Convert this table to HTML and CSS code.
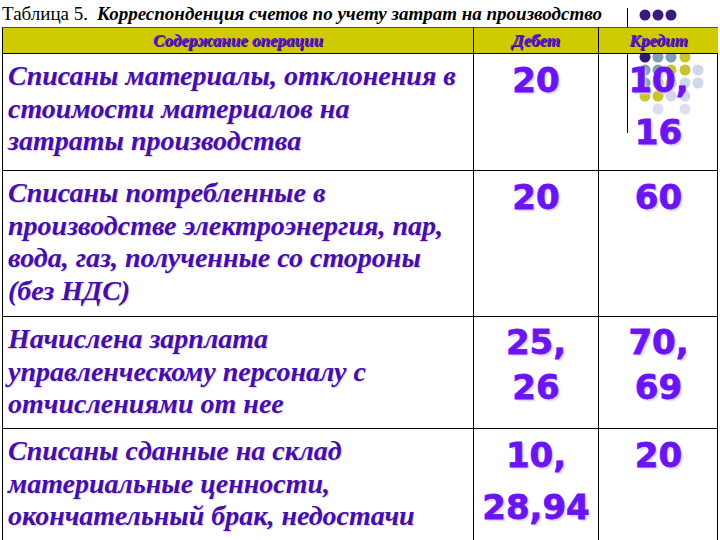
FILE: index.html
```html
<!DOCTYPE html>
<html lang="ru">
<head>
<meta charset="utf-8">
<title>Таблица 5</title>
<link rel="stylesheet" href="styles.css">
</head>
<body>
<div class="slide">
  <svg class="deco" width="720" height="140" viewBox="0 0 720 140" aria-hidden="true">
    <line x1="627.5" y1="8" x2="627.5" y2="133" stroke="#000" stroke-width="1"/>
    <g fill="#3a1a80">
      <circle cx="645" cy="15" r="5.5"/>
      <circle cx="658" cy="15" r="5.5"/>
      <circle cx="671" cy="15" r="5.5"/>
    </g>
    <circle cx="645" cy="57" r="5.5" fill="#2e1a70"/>
    <circle cx="658" cy="57" r="5.5" fill="#7f9fb6"/>
    <circle cx="671" cy="57" r="5.5" fill="#7f9fb6"/>
    <circle cx="685" cy="57" r="5.5" fill="#c9c42c"/>

    <circle cx="645" cy="70" r="5.5" fill="#7f9fb6"/>
    <circle cx="658" cy="70" r="5.5" fill="#7f9fb6"/>
    <circle cx="671" cy="70" r="5.5" fill="#c9c42c"/>
    <circle cx="685" cy="70" r="5.5" fill="#c9c42c"/>
    <circle cx="698" cy="70" r="5.5" fill="#d2d6ec"/>

    <circle cx="645" cy="83" r="5.5" fill="#7f9fb6"/>
    <circle cx="658" cy="83" r="5.5" fill="#c9c42c"/>
    <circle cx="671" cy="83" r="5.5" fill="#c9c42c"/>
    <circle cx="685" cy="83" r="5.5" fill="#d2d6ec"/>
    <circle cx="698" cy="83" r="5.5" fill="#d2d6ec"/>

    <circle cx="645" cy="96" r="5.5" fill="#c9c42c"/>
    <circle cx="658" cy="96" r="5.5" fill="#c9c42c"/>
    <circle cx="671" cy="96" r="5.5" fill="#d2d6ec"/>
    <circle cx="685" cy="96" r="5.5" fill="#d2d6ec"/>

    <circle cx="658" cy="109" r="5.5" fill="#dcdff0"/>
    <circle cx="685" cy="109" r="5.5" fill="#dcdff0"/>
  </svg>

  <div class="title"><span class="t-num">Таблица 5.</span><span class="t-main">Корреспонденция счетов по учету затрат на производство</span></div>

  <div class="table">
    <div class="cell head">Содержание операции</div>
    <div class="cell head">Дебет</div>
    <div class="cell head">Кредит</div>

    <div class="cell txt">Списаны материалы, отклонения в<br>стоимости материалов на<br>затраты производства</div>
    <div class="cell num">20</div>
    <div class="cell num">10,<br>16</div>

    <div class="cell txt">Списаны потребленные в<br>производстве электроэнергия, пар,<br>вода, газ, полученные со стороны<br>(без НДС)</div>
    <div class="cell num">20</div>
    <div class="cell num">60</div>

    <div class="cell txt">Начислена зарплата<br>управленческому персоналу с<br>отчислениями от нее</div>
    <div class="cell num num-tight">25,<br>26</div>
    <div class="cell num num-tight">70,<br>69</div>

    <div class="cell txt">Списаны сданные на склад<br>материальные ценности,<br>окончательный брак, недостачи</div>
    <div class="cell num">10,<br>28,94</div>
    <div class="cell num">20</div>
  </div>
</div>
</body>
</html>
```
FILE: styles.css
```css
html, body {
  margin: 0;
  padding: 0;
  background: #fff;
}

.slide {
  position: relative;
  width: 720px;
  height: 540px;
  overflow: hidden;
  background: #fff;
}

.deco {
  position: absolute;
  left: 0;
  top: 0;
  z-index: 0;
}

.title {
  position: relative;
  z-index: 1;
  height: 27px;
  line-height: 27px;
  padding-left: 2px;
  font-family: "Liberation Serif", "Times New Roman", serif;
  font-size: 19px;
  color: #000;
  white-space: nowrap;
}

.t-main {
  margin-left: 9px;
  font-weight: bold;
  font-style: italic;
}

.table {
  position: relative;
  z-index: 1;
  margin-left: 2px;
  width: 716px;
  display: grid;
  grid-template-columns: 471px 125px 120px;
  grid-template-rows: 26px 117px 146px 112px 130px;
  border-right: 1px solid #000;
  box-sizing: border-box;
}

.cell {
  box-sizing: border-box;
  border-left: 1px solid #000;
  border-top: 1px solid #000;
  background: transparent;
}

.head {
  background: #cfcb00;
  border-top: 1px solid #5a5a00;
  display: flex;
  align-items: center;
  justify-content: center;
  font-family: "Liberation Serif", "Times New Roman", serif;
  font-weight: bold;
  font-style: italic;
  font-size: 17px;
  color: #6014d0;
  text-shadow: 1px 1px 0 #30107a;
  padding-top: 1px;
}

.txt {
  padding: 6px 6px 0 5px;
  font-family: "Liberation Serif", "Times New Roman", serif;
  font-weight: bold;
  font-style: italic;
  font-size: 28px;
  line-height: 32.5px;
  color: #440ea8;
  text-shadow: 1px 1px 1px #dccbf2;
  white-space: nowrap;
}

.num {
  text-align: center;
  font-family: "DejaVu Sans", "Liberation Sans", sans-serif;
  font-weight: bold;
  font-size: 34px;
  line-height: 52px;
  color: #6a14f2;
  -webkit-text-stroke: 0.8px #6a14f2;
  text-shadow: 2px 2px 2px #dccdfc;
  white-space: nowrap;
}

.num-tight {
  line-height: 45px;
  padding-top: 3px;
}
```
